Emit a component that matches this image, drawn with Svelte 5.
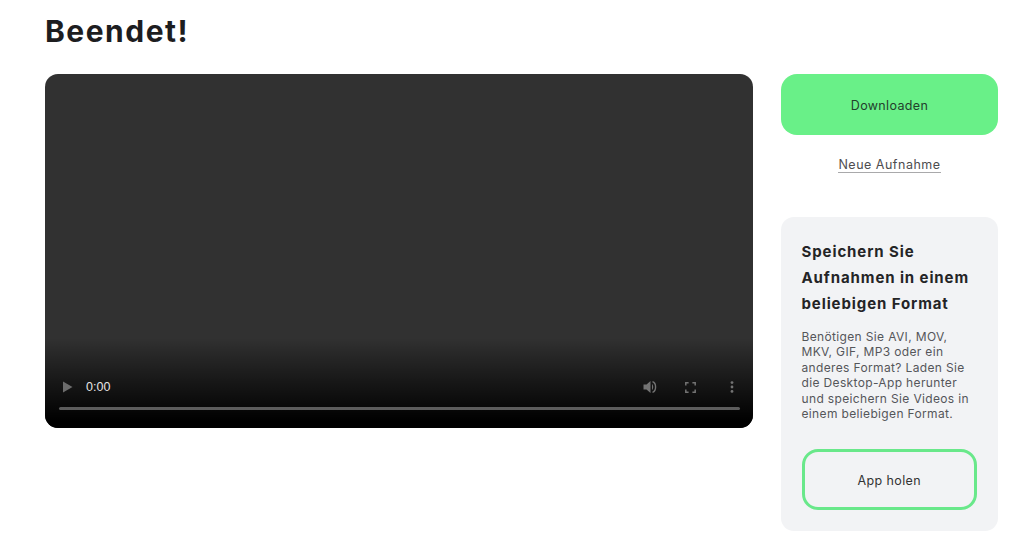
<script>
    let title = "Beendet!";
</script>

<main class="page">
    <h1>{title}</h1>
    <div class="columns">
        <div class="player">
            <div class="shade"></div>
            <div class="controls">
                <div class="buttons">
                    <svg class="play" width="10" height="12" viewBox="0 0 10 12"><path d="M0 0.5 L9.5 6 L0 11.5 Z" fill="#6c6c6c" /></svg>
                    <span class="time">0:00</span>
                    <svg class="volume" width="15" height="14" viewBox="0 0 15 14">
                        <path d="M0.5 4.5 H3.5 L7.5 1 V13 L3.5 9.5 H0.5 Z" fill="#737373" />
                        <path d="M9 4 C10.6 5 10.6 9 9 10 Z" fill="#737373" />
                        <path d="M9.5 1.6 C13.6 3 13.6 11 9.5 12.4" fill="none" stroke="#737373" stroke-width="1.4" />
                    </svg>
                    <svg class="full" width="11" height="11" viewBox="0 0 11 11">
                        <path d="M0.8 3.6 V0.8 H3.6 M7.4 0.8 H10.2 V3.6 M10.2 7.4 V10.2 H7.4 M3.6 10.2 H0.8 V7.4" fill="none" stroke="#737373" stroke-width="1.5" />
                    </svg>
                    <svg class="more" width="4" height="12" viewBox="0 0 4 12">
                        <circle cx="2" cy="1.6" r="1.4" fill="#737373" />
                        <circle cx="2" cy="6" r="1.4" fill="#737373" />
                        <circle cx="2" cy="10.4" r="1.4" fill="#737373" />
                    </svg>
                </div>
                <div class="track"></div>
            </div>
        </div>
        <aside>
            <a class="download" href="#top">Downloaden</a>
            <a class="again" href="#top">Neue Aufnahme</a>
            <section class="promo">
                <h2>Speichern Sie Aufnahmen in einem beliebigen Format</h2>
                <p>Benötigen Sie AVI, MOV, MKV, GIF, MP3 oder ein anderes Format? Laden Sie die Desktop-App herunter und speichern Sie Videos in einem beliebigen Format.</p>
                <a class="get" href="#top">App holen</a>
            </section>
        </aside>
    </div>
</main>

<style>
    :global(body) {
        margin: 0;
        background: #fff;
    }

    .page {
        height: 544px;
        box-sizing: border-box;
        padding: 13px 26px 0 45px;
        overflow: hidden;
        font-family: "Inter", "Liberation Sans", sans-serif;
        color: #1d1d1f;
    }

    h1 {
        margin: 0 0 25px;
        font-size: 30px;
        line-height: 36px;
        font-weight: 700;
        letter-spacing: 1.5px;
    }

    .columns {
        display: flex;
        gap: 28px;
        align-items: flex-start;
    }

    .player {
        position: relative;
        width: 708px;
        height: 354px;
        flex: none;
        border-radius: 13px;
        overflow: hidden;
        background: #313131;
    }

    .shade {
        position: absolute;
        left: 0;
        right: 0;
        bottom: 0;
        height: 90px;
        background: linear-gradient(to bottom, rgba(0, 0, 0, 0), #000 92%);
    }

    .controls {
        position: absolute;
        left: 14px;
        right: 13px;
        bottom: 18px;
    }

    .buttons {
        display: flex;
        align-items: center;
        height: 16px;
        margin-bottom: 12px;
        padding-left: 4px;
    }

    .time {
        margin-left: 13px;
        font-family: "Liberation Sans", sans-serif;
        font-size: 12.5px;
        color: #e6e6e6;
    }

    .volume {
        margin-left: auto;
    }

    .full {
        margin-left: 27px;
    }

    .more {
        margin-left: 34px;
        margin-right: 6px;
    }

    .track {
        height: 3px;
        border-radius: 2px;
        background: #5c5c5c;
    }

    aside {
        width: 217px;
        flex: none;
        display: flex;
        flex-direction: column;
    }

    a {
        text-decoration: none;
        color: inherit;
    }

    .download {
        height: 61px;
        box-sizing: border-box;
        padding-top: 2px;
        display: flex;
        align-items: center;
        justify-content: center;
        border-radius: 16px;
        background: #69f088;
        font-size: 12.5px;
        letter-spacing: 0.35px;
        color: #23402c;
    }

    .again {
        align-self: center;
        margin-top: 22px;
        font-size: 12.5px;
        line-height: 15px;
        letter-spacing: 0.5px;
        color: #4d4d4f;
        border-bottom: 1px solid #a9a9ab;
    }

    .promo {
        margin-top: 44px;
        padding: 21px 21px 21px 20.5px;
        height: 314px;
        box-sizing: border-box;
        border-radius: 13px;
        background: #f2f3f5;
    }

    h2 {
        margin: 1px 0 12px;
        font-size: 15px;
        line-height: 26px;
        font-weight: 700;
        letter-spacing: 0.9px;
        color: #242426;
    }

    p {
        margin: 0 0 28px;
        font-size: 12px;
        line-height: 15.4px;
        letter-spacing: 0.35px;
        color: #55565a;
    }

    .get {
        display: flex;
        align-items: center;
        justify-content: center;
        height: 61px;
        box-sizing: border-box;
        padding-top: 2px;
        border: 3px solid #69e88a;
        border-radius: 16px;
        font-size: 12.5px;
        letter-spacing: 0.4px;
        color: #333;
    }
</style>
